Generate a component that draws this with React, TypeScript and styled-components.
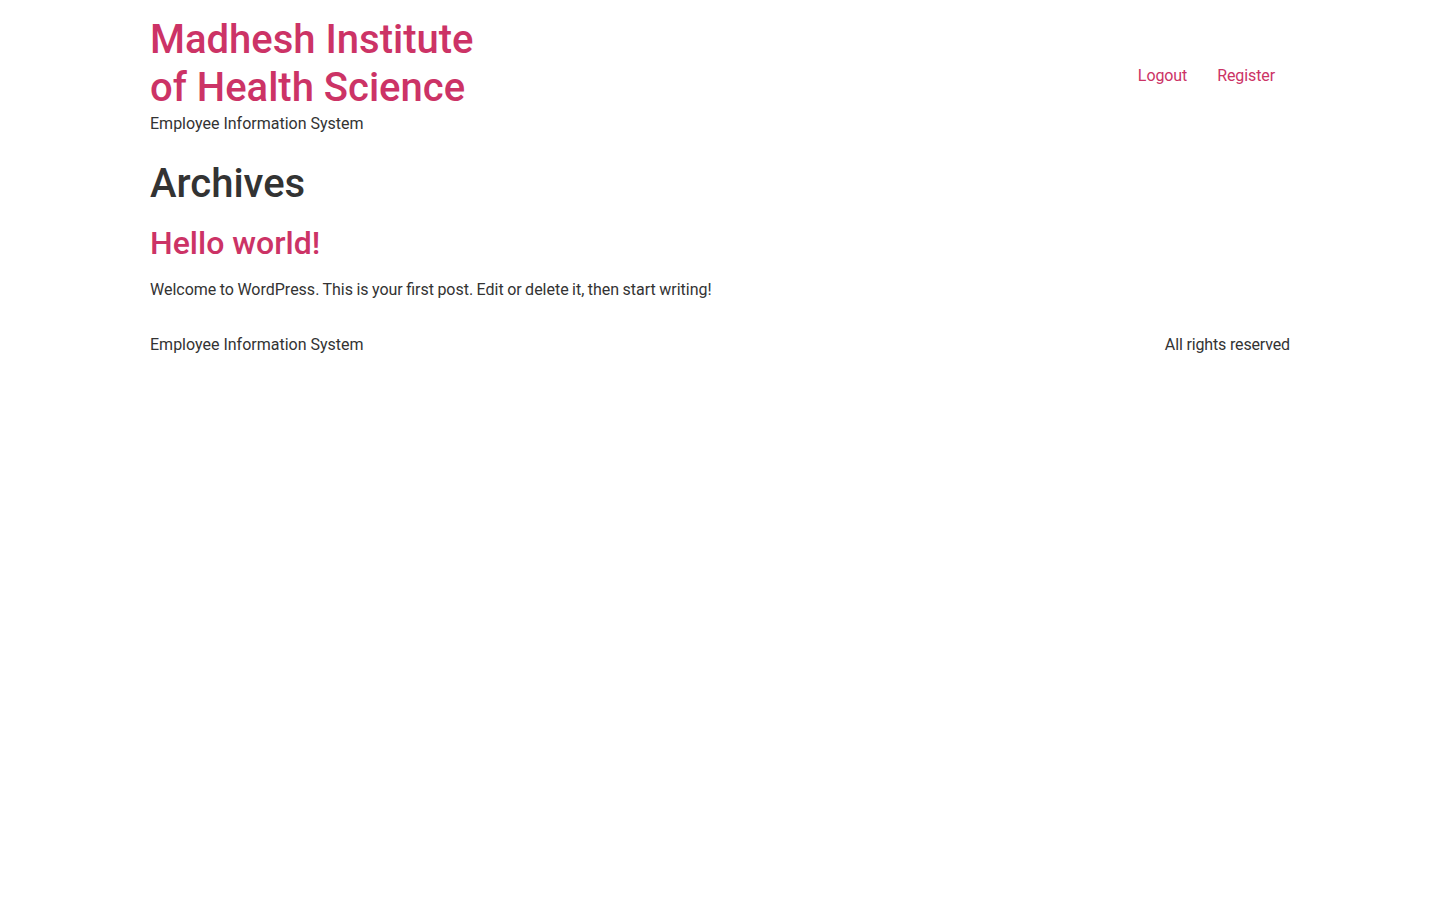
import React from "react";
import styled, { createGlobalStyle } from "styled-components";

const Global = createGlobalStyle`
  html, body { margin: 0; padding: 0; background: #fff; }
  body {
    font-family: Roboto, "Noto Sans", "Liberation Sans", sans-serif;
    font-size: 16px;
    line-height: 1.5;
    color: #333333;
  }
  * { box-sizing: border-box; }
`;

const Page = styled.div`
  width: 1140px;
  margin: 0 auto;
`;

const Header = styled.header`
  display: flex;
  align-items: center;
  justify-content: space-between;
  padding: 16px 0;
`;

const Branding = styled.div`
  display: flex;
  flex-direction: column;
  max-width: 340px;
`;

const SiteTitle = styled.h1`
  margin: 0;
  font-size: 40px;
  line-height: 1.2;
  font-weight: 500;
  color: #cc3366;
`;

const Tagline = styled.p`
  margin: 0;
  font-size: 16px;
  line-height: 24px;
`;

const Nav = styled.nav`
  display: flex;
`;

const NavLink = styled.a`
  padding: 10px 15px;
  color: #cc3366;
  text-decoration: none;
  font-size: 16px;
  line-height: 24px;
  letter-spacing: -0.1px;
`;

const Main = styled.main`
  display: flex;
  flex-direction: column;
`;

const PageTitle = styled.h1`
  margin: 8px 0 16px;
  font-size: 40px;
  line-height: 1.2;
  font-weight: 500;
  color: #333333;
`;

const PostTitle = styled.h2`
  margin: 0 0 16px;
  font-size: 32px;
  line-height: 1.2;
  font-weight: 500;
  color: #cc3366;
`;

const Excerpt = styled.p`
  margin: 0 0 14px;
  word-spacing: -0.55px;
`;

const Footer = styled.footer`
  display: flex;
  justify-content: space-between;
  padding: 17px 0;
`;

const FooterText = styled.p<{ $tight?: boolean }>`
  margin: 0;
  letter-spacing: ${(p) => (p.$tight ? "-0.15px" : "normal")};
`;

export default function App() {
  return (
    <>
      <Global />
      <Page>
        <Header>
          <Branding>
            <SiteTitle>Madhesh Institute of Health Science</SiteTitle>
            <Tagline>Employee Information System</Tagline>
          </Branding>
          <Nav>
            <NavLink href="#">Logout</NavLink>
            <NavLink href="#">Register</NavLink>
          </Nav>
        </Header>
        <Main>
          <PageTitle>Archives</PageTitle>
          <PostTitle>Hello world!</PostTitle>
          <Excerpt>Welcome to WordPress. This is your first post. Edit or delete it, then start writing!</Excerpt>
        </Main>
        <Footer>
          <FooterText>Employee Information System</FooterText>
          <FooterText $tight>All rights reserved</FooterText>
        </Footer>
      </Page>
    </>
  );
}
